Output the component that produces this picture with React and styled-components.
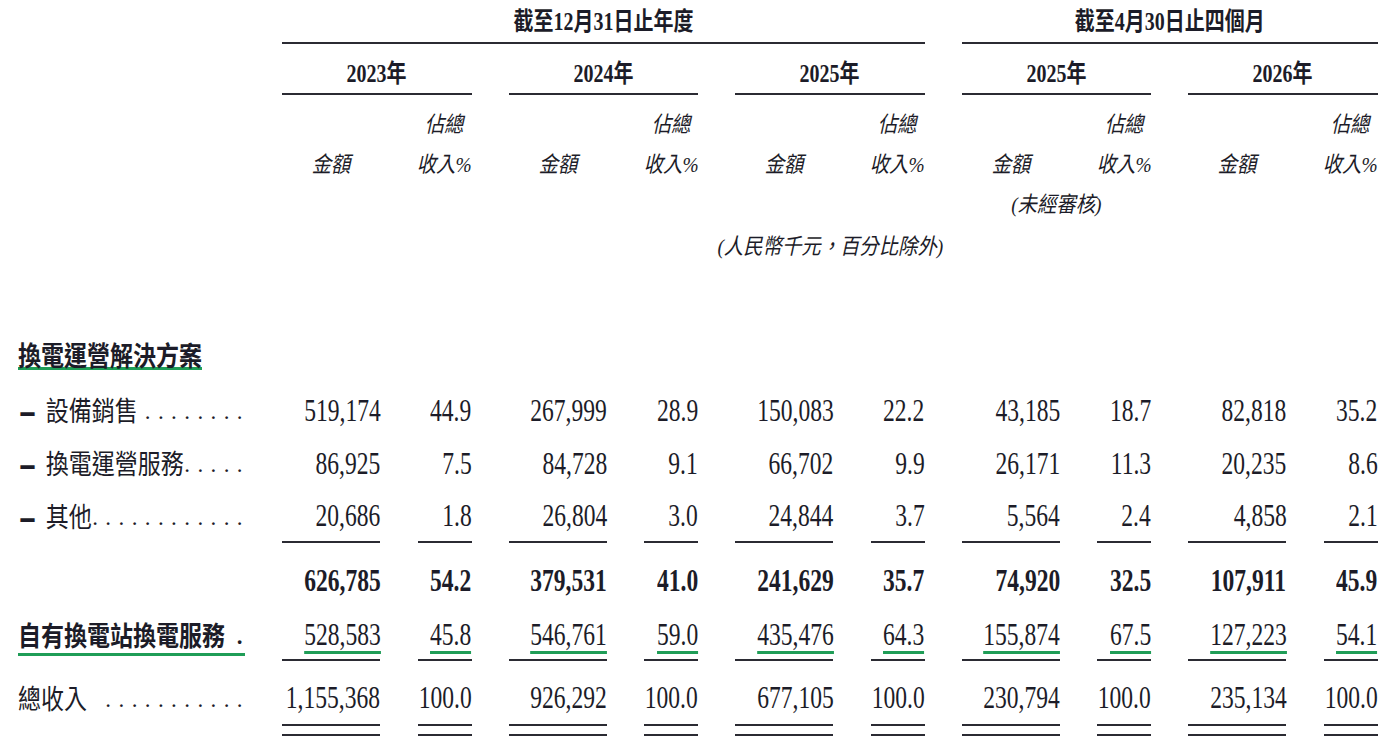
import React from "react";
import styled, { createGlobalStyle, css } from "styled-components";

const GlobalStyle = createGlobalStyle`
  body {
    margin: 0;
    background: #fff;
    color: #1c1c28;
    font-family: "Liberation Serif", "Noto Sans CJK TC", serif;
  }
`;

const INK = "#2b2b33";
const GREEN = "#1f9d57";

const Sheet = styled.div`
  width: 1390px;
  height: 746px;
  overflow: hidden;
`;

const Row = styled.div`
  display: grid;
  grid-template-columns: 227px repeat(5, 98px 54px);
  column-gap: 37.25px;
  padding-left: 18px;
  height: ${(p) => p.$h}px;
  margin-top: ${(p) => p.$mt || 0}px;
`;

// header cell, spans some columns, optional rule under it
const HeadCell = styled.div`
  grid-column: ${(p) => p.$col || "auto"};
  display: flex;
  align-items: center;
  justify-content: center;
  padding-top: ${(p) => p.$pt || 0}px;
  ${(p) =>
    p.$rule &&
    css`
      border-bottom: 2px solid ${INK};
    `}
`;

const HeadText = styled.span`
  display: inline-block;
  white-space: nowrap;
  font-family: "Liberation Serif", "Noto Sans CJK TC", serif;
  font-size: 25px;
  font-weight: 700;
  line-height: 1;
  transform: scaleX(0.8);
`;

const SubText = styled.span`
  display: inline-block;
  white-space: nowrap;
  font-family: "Liberation Serif", "Noto Sans CJK TC", serif;
  font-size: 22px;
  font-style: italic;
  line-height: 1;
  transform: scaleX(0.88);
`;

const LabelCell = styled.div`
  display: flex;
  align-items: center;
  justify-content: flex-start;
  padding-bottom: ${(p) => p.$pb || 0}px;
`;

const Label = styled.div`
  display: flex;
  align-items: baseline;
  width: ${(p) => (p.$full ? "100%" : "auto")};
  font-family: "Noto Sans CJK TC", sans-serif;
  font-size: 23px;
  font-weight: ${(p) => (p.$bold ? 700 : 400)};
  line-height: ${(p) => p.$lh || 30}px;
  white-space: nowrap;
  ${(p) =>
    p.$green &&
    css`
      border-bottom: 3px solid ${GREEN};
    `}
`;

// the print is a little taller than it is wide
const LabelText = styled.span`
  display: inline-block;
  transform: scaleY(1.18);
`;

const Dash = styled.span`
  display: inline-block;
  font-family: "Liberation Sans", sans-serif;
  font-weight: 700;
  font-size: 23px;
  margin: 0 12px 0 3px;
  transform: scale(1.25, 1.6);
`;

const Dots = styled.span`
  margin-left: auto;
  margin-right: -5px;
  font-family: "Liberation Serif", serif;
  font-size: 23px;
  letter-spacing: 7.4px;
`;

const NumCell = styled.div`
  display: flex;
  align-items: center;
  justify-content: flex-end;
  padding-bottom: ${(p) => p.$pb || 0}px;
  ${(p) =>
    p.$rule === "single" &&
    css`
      border-bottom: 2px solid ${INK};
    `}
  ${(p) =>
    p.$rule === "double" &&
    css`
      border-bottom: 2px solid ${INK};
      background: linear-gradient(${INK}, ${INK}) left bottom 8px / 100% 2px
        no-repeat;
    `}
`;

const Num = styled.span`
  display: inline-block;
  white-space: nowrap;
  font-family: "Liberation Serif", serif;
  font-size: 31px;
  font-weight: ${(p) => (p.$bold ? 700 : 400)};
  line-height: ${(p) => (p.$green ? "33px" : 1)};
  transform: scaleX(0.76);
  transform-origin: right center;
  ${(p) =>
    p.$green &&
    css`
      border-bottom: 3px solid ${GREEN};
    `}
`;

const years = ["2023年", "2024年", "2025年", "2025年", "2026年"];

const lines = [
  {
    dash: true,
    label: "設備銷售",
    dots: 8,
    h: 54,
    values: [
      ["519,174", "44.9"],
      ["267,999", "28.9"],
      ["150,083", "22.2"],
      ["43,185", "18.7"],
      ["82,818", "35.2"],
    ],
  },
  {
    dash: true,
    label: "換電運營服務",
    dots: 5,
    h: 53,
    values: [
      ["86,925", "7.5"],
      ["84,728", "9.1"],
      ["66,702", "9.9"],
      ["26,171", "11.3"],
      ["20,235", "8.6"],
    ],
  },
  {
    dash: true,
    label: "其他",
    dots: 12,
    h: 53,
    rule: "single",
    values: [
      ["20,686", "1.8"],
      ["26,804", "3.0"],
      ["24,844", "3.7"],
      ["5,564", "2.4"],
      ["4,858", "2.1"],
    ],
  },
  {
    label: "",
    h: 74,
    bold: true,
    values: [
      ["626,785", "54.2"],
      ["379,531", "41.0"],
      ["241,629", "35.7"],
      ["74,920", "32.5"],
      ["107,911", "45.9"],
    ],
  },
  {
    label: "自有換電站換電服務",
    dots: 1,
    h: 44,
    pb: 4,
    green: true,
    strong: true,
    rule: "single",
    values: [
      ["528,583", "45.8"],
      ["546,761", "59.0"],
      ["435,476", "64.3"],
      ["155,874", "67.5"],
      ["127,223", "54.1"],
    ],
  },
  {
    label: "總收入",
    dots: 11,
    h: 75,
    rule: "double",
    values: [
      ["1,155,368", "100.0"],
      ["926,292", "100.0"],
      ["677,105", "100.0"],
      ["230,794", "100.0"],
      ["235,134", "100.0"],
    ],
  },
];

function DataRow({ line }) {
  return (
    <Row $h={line.h}>
      <LabelCell $pb={line.pb}>
        {line.label && (
          <Label
            $full
            $bold={line.strong}
            $green={line.green}
            $lh={line.green ? 32 : 30}
          >
            {line.dash && <Dash>–</Dash>}
            <LabelText>{line.label}</LabelText>
            <Dots>{".".repeat(line.dots)}</Dots>
          </Label>
        )}
      </LabelCell>
      {line.values.map(([amount, pct], i) => (
        <React.Fragment key={i}>
          <NumCell $rule={line.rule} $pb={line.pb}>
            <Num $bold={line.bold} $green={line.green}>
              {amount}
            </Num>
          </NumCell>
          <NumCell $rule={line.rule} $pb={line.pb}>
            <Num $bold={line.bold} $green={line.green}>
              {pct}
            </Num>
          </NumCell>
        </React.Fragment>
      ))}
    </Row>
  );
}

export default function App() {
  return (
    <Sheet>
      <GlobalStyle />

      <Row $h={44}>
        <div />
        <HeadCell $col="2 / span 6" $rule>
          <HeadText>截至12月31日止年度</HeadText>
        </HeadCell>
        <HeadCell $col="8 / span 4" $rule>
          <HeadText>截至4月30日止四個月</HeadText>
        </HeadCell>
      </Row>

      <Row $h={51}>
        <div />
        {years.map((y, i) => (
          <HeadCell key={i} $col="span 2" $rule $pt={9}>
            <HeadText>{y}</HeadText>
          </HeadCell>
        ))}
      </Row>

      <Row $h={40} $mt={10}>
        <div />
        {years.map((y, i) => (
          <React.Fragment key={i}>
            <div />
            <HeadCell>
              <SubText>佔總</SubText>
            </HeadCell>
          </React.Fragment>
        ))}
      </Row>

      <Row $h={40}>
        <div />
        {years.map((y, i) => (
          <React.Fragment key={i}>
            <HeadCell>
              <SubText>金額</SubText>
            </HeadCell>
            <HeadCell>
              <SubText>收入%</SubText>
            </HeadCell>
          </React.Fragment>
        ))}
      </Row>

      <Row $h={40}>
        <div />
        <HeadCell $col="8 / span 2">
          <SubText>(未經審核)</SubText>
        </HeadCell>
      </Row>

      <Row $h={44}>
        <div />
        <HeadCell $col="2 / -1">
          <SubText>(人民幣千元，百分比除外)</SubText>
        </HeadCell>
      </Row>

      <Row $h={56} $mt={58}>
        <LabelCell>
          <Label $bold $green $lh={26}>
            <LabelText>換電運營解決方案</LabelText>
          </Label>
        </LabelCell>
      </Row>

      {lines.map((line, i) => (
        <DataRow key={i} line={line} />
      ))}
    </Sheet>
  );
}
